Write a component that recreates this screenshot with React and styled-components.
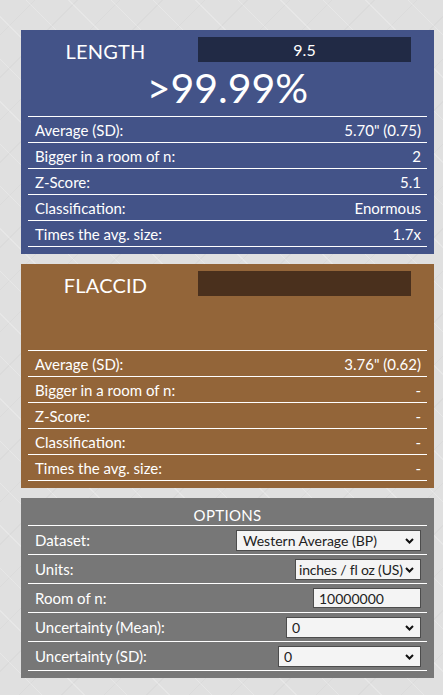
import React from 'react';
import styled, { createGlobalStyle } from 'styled-components';

const GlobalStyle = createGlobalStyle`
  html, body {
    margin: 0;
    padding: 0;
  }
  body {
    min-height: 695px;
    background-color: #e0e0e0;
    background-image:
      repeating-linear-gradient(45deg, rgba(255,255,255,0.22) 0px, rgba(255,255,255,0.22) 1px, transparent 1px, transparent 30px),
      repeating-linear-gradient(-45deg, rgba(0,0,0,0.025) 0px, rgba(0,0,0,0.025) 1px, transparent 1px, transparent 30px);
    font-family: Lato, "Open Sans", sans-serif;
    color: #fff;
  }
`;

const Page = styled.div`
  display: flex;
  flex-direction: column;
  gap: 10px;
  padding: 30px 9px 18px 21px;
`;

const Panel = styled.section`
  display: flex;
  flex-direction: column;
  padding: 7px 7px 7px;
  background-color: ${({ $bg }) => $bg};
`;

const Header = styled.div`
  display: flex;
  flex-direction: row;
  align-items: center;
  height: 25px;
`;

const Title = styled.div`
  width: 155px;
  text-align: center;
  font-size: 20px;
  letter-spacing: 0.2px;
  margin-top: 2px;
`;

const ValueBox = styled.div`
  margin-left: 15px;
  width: 213px;
  height: 25px;
  display: flex;
  align-items: center;
  justify-content: center;
  background-color: ${({ $bg }) => $bg};
  font-size: 16px;
`;

const Percent = styled.div`
  height: 54px;
  display: flex;
  align-items: center;
  justify-content: center;
  font-size: 41px;
  padding-bottom: 4px;
  box-sizing: border-box;
`;

const Table = styled.div`
  border-top: 1px solid #fff;
`;

const Row = styled.div`
  display: flex;
  justify-content: space-between;
  align-items: center;
  flex-shrink: 0;
  box-sizing: border-box;
  height: ${({ $h }) => $h || 26}px;
  padding: 0 6px 0 7px;
  border-bottom: 1px solid #fff;
  font-size: 15px;
`;

const OptionsTitle = styled.div`
  height: 20px;
  display: flex;
  align-items: flex-end;
  justify-content: center;
  font-size: 15px;
  letter-spacing: 0.3px;
  padding-bottom: 1px;
  box-sizing: border-box;
`;

const SelectWrap = styled.span`
  position: relative;
  display: inline-block;
  width: ${({ $w }) => $w}px;
  height: 21px;
`;

const Select = styled.select`
  appearance: none;
  box-sizing: border-box;
  width: 100%;
  height: 100%;
  margin: 0;
  padding: 0 ${({ $pr }) => $pr || 18}px 0 ${({ $pl }) => $pl || 5}px;
  border: 1px solid #4c4c4c;
  border-radius: 0;
  background: #f4f4f4;
  color: #222;
  font-family: Lato, "Open Sans", sans-serif;
  font-size: 14px;
  letter-spacing: ${({ $ls }) => $ls || 0}px;
`;

const Chevron = styled.svg`
  position: absolute;
  right: 7px;
  top: 8px;
  width: 9px;
  height: 6px;
  pointer-events: none;
`;

const TextInput = styled.input`
  box-sizing: border-box;
  width: 108px;
  height: 20px;
  margin: 0;
  padding: 0 5px;
  border: 1px solid #4c4c4c;
  background: #f4f4f4;
  color: #222;
  font-family: Lato, "Open Sans", sans-serif;
  font-size: 14px;
`;

const statRows = (values) => [
  ['Average (SD):', values[0]],
  ['Bigger in a room of n:', values[1]],
  ['Z-Score:', values[2]],
  ['Classification:', values[3]],
  ['Times the avg. size:', values[4]],
];

function StatPanel({ title, value, percent, bg, boxBg, values }) {
  return (
    <Panel $bg={bg}>
      <Header>
        <Title>{title}</Title>
        <ValueBox $bg={boxBg}>{value}</ValueBox>
      </Header>
      <Percent>{percent}</Percent>
      <Table>
        {statRows(values).map(([label, val]) => (
          <Row key={label}>
            <span>{label}</span>
            <span>{val}</span>
          </Row>
        ))}
      </Table>
    </Panel>
  );
}

function Dropdown({ width, value, pl, pr, ls }) {
  return (
    <SelectWrap $w={width}>
      <Select $pl={pl} $pr={pr} $ls={ls} defaultValue={value}>
        <option>{value}</option>
      </Select>
      <Chevron viewBox="0 0 9 6">
        <path d="M1 1 L4.5 4.5 L8 1" fill="none" stroke="#111" strokeWidth="2" />
      </Chevron>
    </SelectWrap>
  );
}

export default function App() {
  return (
    <>
      <GlobalStyle />
      <Page>
        <StatPanel
          title="LENGTH"
          value="9.5"
          percent=">99.99%"
          bg="#435388"
          boxBg="#212a45"
          values={['5.70" (0.75)', '2', '5.1', 'Enormous', '1.7x']}
        />
        <StatPanel
          title="FLACCID"
          value=""
          percent=""
          bg="#936539"
          boxBg="#4a301d"
          values={['3.76" (0.62)', '-', '-', '-', '-']}
        />
        <Panel $bg="#777777">
          <OptionsTitle>OPTIONS</OptionsTitle>
          <Table>
            <Row $h={29}>
              <span>Dataset:</span>
              <Dropdown width={185} value="Western Average (BP)" pl={6} />
            </Row>
            <Row $h={29}>
              <span>Units:</span>
              <Dropdown width={126} value="inches / fl oz (US)" pl={3} pr={11} ls={-0.2} />
            </Row>
            <Row $h={29}>
              <span>Room of n:</span>
              <TextInput defaultValue="10000000" />
            </Row>
            <Row $h={29}>
              <span>Uncertainty (Mean):</span>
              <Dropdown width={135} value="0" />
            </Row>
            <Row $h={29}>
              <span>Uncertainty (SD):</span>
              <Dropdown width={143} value="0" />
            </Row>
          </Table>
        </Panel>
      </Page>
    </>
  );
}
